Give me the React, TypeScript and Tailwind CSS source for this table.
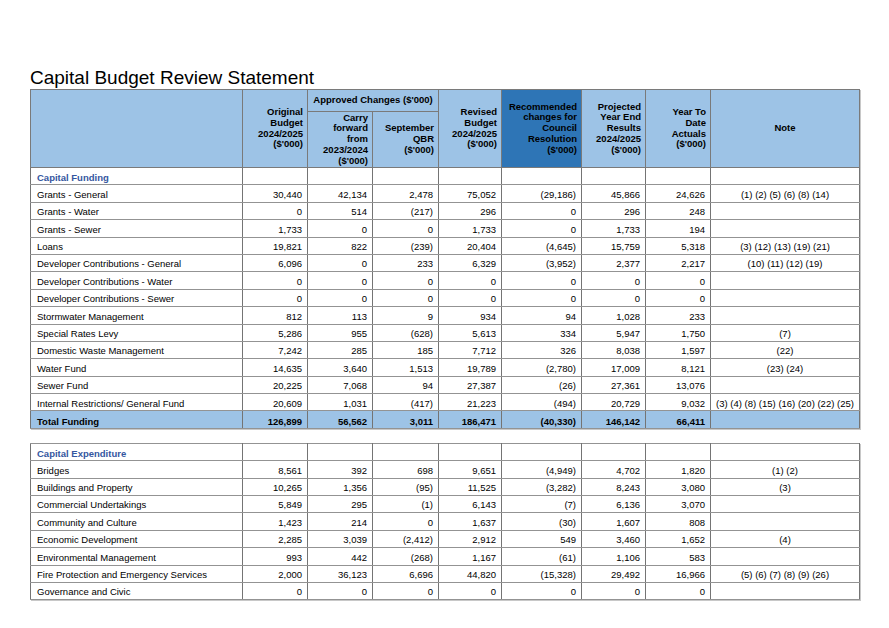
import React from "react";

type Row = { label: string; vals: string[]; note?: string };

const funding: Row[] = [
  { label: "Grants - General", vals: ["30,440", "42,134", "2,478", "75,052", "(29,186)", "45,866", "24,626"], note: "(1) (2) (5) (6) (8) (14)" },
  { label: "Grants - Water", vals: ["0", "514", "(217)", "296", "0", "296", "248"] },
  { label: "Grants - Sewer", vals: ["1,733", "0", "0", "1,733", "0", "1,733", "194"] },
  { label: "Loans", vals: ["19,821", "822", "(239)", "20,404", "(4,645)", "15,759", "5,318"], note: "(3) (12) (13) (19) (21)" },
  { label: "Developer Contributions - General", vals: ["6,096", "0", "233", "6,329", "(3,952)", "2,377", "2,217"], note: "(10) (11) (12) (19)" },
  { label: "Developer Contributions - Water", vals: ["0", "0", "0", "0", "0", "0", "0"] },
  { label: "Developer Contributions - Sewer", vals: ["0", "0", "0", "0", "0", "0", "0"] },
  { label: "Stormwater Management", vals: ["812", "113", "9", "934", "94", "1,028", "233"] },
  { label: "Special Rates Levy", vals: ["5,286", "955", "(628)", "5,613", "334", "5,947", "1,750"], note: "(7)" },
  { label: "Domestic Waste Management", vals: ["7,242", "285", "185", "7,712", "326", "8,038", "1,597"], note: "(22)" },
  { label: "Water Fund", vals: ["14,635", "3,640", "1,513", "19,789", "(2,780)", "17,009", "8,121"], note: "(23) (24)" },
  { label: "Sewer Fund", vals: ["20,225", "7,068", "94", "27,387", "(26)", "27,361", "13,076"] },
  { label: "Internal Restrictions/ General Fund", vals: ["20,609", "1,031", "(417)", "21,223", "(494)", "20,729", "9,032"], note: "(3) (4) (8) (15) (16) (20) (22) (25)" },
];

const expenditure: Row[] = [
  { label: "Bridges", vals: ["8,561", "392", "698", "9,651", "(4,949)", "4,702", "1,820"], note: "(1) (2)" },
  { label: "Buildings and Property", vals: ["10,265", "1,356", "(95)", "11,525", "(3,282)", "8,243", "3,080"], note: "(3)" },
  { label: "Commercial Undertakings", vals: ["5,849", "295", "(1)", "6,143", "(7)", "6,136", "3,070"] },
  { label: "Community and Culture", vals: ["1,423", "214", "0", "1,637", "(30)", "1,607", "808"] },
  { label: "Economic Development", vals: ["2,285", "3,039", "(2,412)", "2,912", "549", "3,460", "1,652"], note: "(4)" },
  { label: "Environmental Management", vals: ["993", "442", "(268)", "1,167", "(61)", "1,106", "583"] },
  { label: "Fire Protection and Emergency Services", vals: ["2,000", "36,123", "6,696", "44,820", "(15,328)", "29,492", "16,966"], note: "(5) (6) (7) (8) (9) (26)" },
  { label: "Governance and Civic", vals: ["0", "0", "0", "0", "0", "0", "0"] },
];

const widths = ["w-[212px]", "w-[65px]", "w-[65px]", "w-[66px]", "w-[63px]", "w-[80px]", "w-[64px]", "w-[65px]", "w-[149px]"];

function Cols() {
  return (
    <colgroup>
      {widths.map((w, i) => (
        <col key={i} className={w} />
      ))}
    </colgroup>
  );
}

const cell = "border border-y-[#939393] border-x-[#747474] h-[17.4px] p-0 pt-[2px] leading-none";
const hd = "border border-[#7a7a7a] bg-[#9dc3e6] font-bold text-[9.5px] leading-[10.7px] px-[4px] align-middle";

function DataRow({ r }: { r: Row }) {
  return (
    <tr>
      <td className={`${cell} pl-[6px] text-left whitespace-nowrap`}>{r.label}</td>
      {r.vals.map((v, i) => (
        <td key={i} className={`${cell} pr-[5px] text-right`}>{v}</td>
      ))}
      <td className={`${cell} text-center whitespace-nowrap`}>{r.note ?? ""}</td>
    </tr>
  );
}

function SectionRow({ title }: { title: string }) {
  return (
    <tr>
      <td className={`${cell} pl-[6px] align-bottom pb-[2px] font-bold text-[#3556a0] whitespace-nowrap`}>{title}</td>
      {Array.from({ length: 8 }).map((_, i) => (
        <td key={i} className={cell}></td>
      ))}
    </tr>
  );
}

export default function App() {
  return (
    <div className="w-[889px] h-[628px] bg-white text-black font-['Liberation_Sans',Arial,sans-serif] overflow-hidden">
      <div className="pl-[30px] pt-[66px]">
        <h1 className="text-[19px] leading-[23px] font-normal">Capital Budget Review Statement</h1>
        <table className="table-fixed border-collapse w-[829px] text-[9.5px] shadow-[1px_1px_0_#c8c8c8]">
          <Cols />
          <thead>
            <tr className="h-[22px]">
              <th rowSpan={2} className={`${hd} h-[78px]`}></th>
              <th rowSpan={2} className={`${hd} text-right`}>
                Original<br />Budget<br />2024/2025<br />($'000)
              </th>
              <th colSpan={2} className={`${hd} text-center`}>Approved Changes ($'000)</th>
              <th rowSpan={2} className={`${hd} text-right`}>
                Revised<br />Budget<br />2024/2025<br />($'000)
              </th>
              <th rowSpan={2} className={`${hd} !bg-[#2e75b6] text-right`}>
                Recommended<br />changes for<br />Council<br />Resolution<br />($'000)
              </th>
              <th rowSpan={2} className={`${hd} text-right`}>
                Projected<br />Year End<br />Results<br />2024/2025<br />($'000)
              </th>
              <th rowSpan={2} className={`${hd} text-right`}>
                Year To<br />Date<br />Actuals<br />($'000)
              </th>
              <th rowSpan={2} className={`${hd} text-center`}>Note</th>
            </tr>
            <tr className="h-[56px]">
              <th className={`${hd} text-right`}>
                Carry<br />forward<br />from<br />2023/2024<br />($'000)
              </th>
              <th className={`${hd} text-right`}>
                September<br />QBR<br />($'000)
              </th>
            </tr>
          </thead>
          <tbody>
            <SectionRow title="Capital Funding" />
            {funding.map((r) => (
              <DataRow key={r.label} r={r} />
            ))}
            <tr className="bg-[#9dc3e6] font-bold">
              <td className={`${cell} pl-[6px] align-bottom pb-[1px]`}>Total Funding</td>
              {["126,899", "56,562", "3,011", "186,471", "(40,330)", "146,142", "66,411"].map((v, i) => (
                <td key={i} className={`${cell} pr-[5px] text-right align-bottom pb-[1px]`}>{v}</td>
              ))}
              <td className={cell}></td>
            </tr>
          </tbody>
        </table>
        <table className="table-fixed border-collapse w-[829px] text-[9.5px] mt-[14px] shadow-[1px_1px_0_#c8c8c8]">
          <Cols />
          <tbody>
            <SectionRow title="Capital Expenditure" />
            {expenditure.map((r) => (
              <DataRow key={r.label} r={r} />
            ))}
          </tbody>
        </table>
      </div>
    </div>
  );
}
